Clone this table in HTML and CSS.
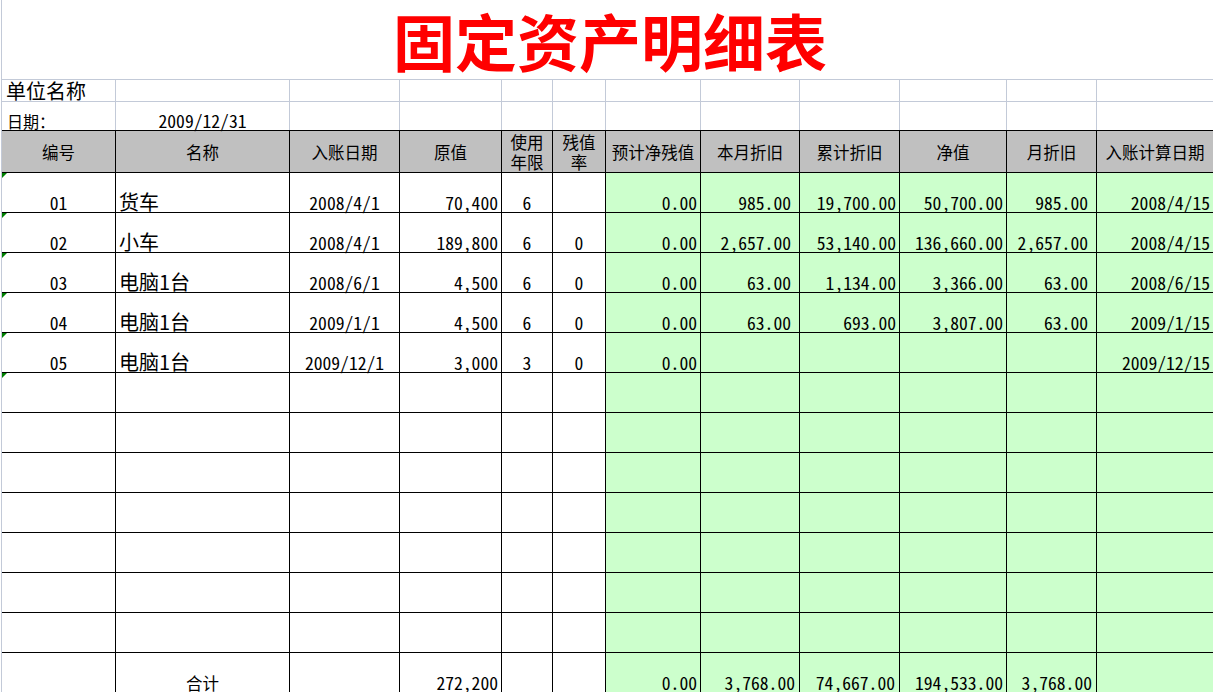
FILE: index.html
```html
<!DOCTYPE html>
<html lang="zh-CN">
<head>
<meta charset="utf-8">
<title>固定资产明细表</title>
<link rel="stylesheet" href="styles.css">
</head>
<body>
<div class="sheet">
  <div class="title-row"><h1 class="title">固定资产明细表</h1></div>

  <div class="row info info-unit">
    <div class="c unit">单位名称</div>
    <div class="c"></div><div class="c"></div><div class="c"></div><div class="c"></div><div class="c"></div>
    <div class="c"></div><div class="c"></div><div class="c"></div><div class="c"></div><div class="c"></div><div class="c"></div>
  </div>

  <div class="row info info-date">
    <div class="c label">日期：</div>
    <div class="c num center">2009/12/31</div>
    <div class="c"></div><div class="c"></div><div class="c"></div><div class="c"></div>
    <div class="c"></div><div class="c"></div><div class="c"></div><div class="c"></div><div class="c"></div><div class="c"></div>
  </div>

  <div class="row head">
    <div class="c">编号</div>
    <div class="c">名称</div>
    <div class="c">入账日期</div>
    <div class="c">原值</div>
    <div class="c two">使用<br>年限</div>
    <div class="c two">残值<br>率</div>
    <div class="c">预计净残值</div>
    <div class="c">本月折旧</div>
    <div class="c">累计折旧</div>
    <div class="c">净值</div>
    <div class="c">月折旧</div>
    <div class="c">入账计算日期</div>
  </div>

  <div class="row data">
    <div class="c num center tri">01</div>
    <div class="c name">货车</div>
    <div class="c num center">2008/4/1</div>
    <div class="c num right">70,400</div>
    <div class="c num center">6</div>
    <div class="c num center"></div>
    <div class="c g num right">0.00</div>
    <div class="c g num right wide">985.00</div>
    <div class="c g num right">19,700.00</div>
    <div class="c g num right">50,700.00</div>
    <div class="c g num right wide">985.00</div>
    <div class="c g num right">2008/4/15</div>
  </div>

  <div class="row data">
    <div class="c num center tri">02</div>
    <div class="c name">小车</div>
    <div class="c num center">2008/4/1</div>
    <div class="c num right">189,800</div>
    <div class="c num center">6</div>
    <div class="c num center">0</div>
    <div class="c g num right">0.00</div>
    <div class="c g num right wide">2,657.00</div>
    <div class="c g num right">53,140.00</div>
    <div class="c g num right">136,660.00</div>
    <div class="c g num right wide">2,657.00</div>
    <div class="c g num right">2008/4/15</div>
  </div>

  <div class="row data">
    <div class="c num center tri">03</div>
    <div class="c name">电脑1台</div>
    <div class="c num center">2008/6/1</div>
    <div class="c num right">4,500</div>
    <div class="c num center">6</div>
    <div class="c num center">0</div>
    <div class="c g num right">0.00</div>
    <div class="c g num right wide">63.00</div>
    <div class="c g num right">1,134.00</div>
    <div class="c g num right">3,366.00</div>
    <div class="c g num right wide">63.00</div>
    <div class="c g num right">2008/6/15</div>
  </div>

  <div class="row data">
    <div class="c num center tri">04</div>
    <div class="c name">电脑1台</div>
    <div class="c num center">2009/1/1</div>
    <div class="c num right">4,500</div>
    <div class="c num center">6</div>
    <div class="c num center">0</div>
    <div class="c g num right">0.00</div>
    <div class="c g num right wide">63.00</div>
    <div class="c g num right">693.00</div>
    <div class="c g num right">3,807.00</div>
    <div class="c g num right wide">63.00</div>
    <div class="c g num right">2009/1/15</div>
  </div>

  <div class="row data">
    <div class="c num center tri">05</div>
    <div class="c name">电脑1台</div>
    <div class="c num center">2009/12/1</div>
    <div class="c num right">3,000</div>
    <div class="c num center">3</div>
    <div class="c num center">0</div>
    <div class="c g num right">0.00</div>
    <div class="c g num right wide"></div>
    <div class="c g num right"></div>
    <div class="c g num right"></div>
    <div class="c g num right wide"></div>
    <div class="c g num right">2009/12/15</div>
  </div>

  <div class="row data">
    <div class="c tri"></div><div class="c"></div><div class="c"></div><div class="c"></div><div class="c"></div><div class="c"></div>
    <div class="c g"></div><div class="c g"></div><div class="c g"></div><div class="c g"></div><div class="c g"></div><div class="c g"></div>
  </div>
  <div class="row data">
    <div class="c"></div><div class="c"></div><div class="c"></div><div class="c"></div><div class="c"></div><div class="c"></div>
    <div class="c g"></div><div class="c g"></div><div class="c g"></div><div class="c g"></div><div class="c g"></div><div class="c g"></div>
  </div>
  <div class="row data">
    <div class="c"></div><div class="c"></div><div class="c"></div><div class="c"></div><div class="c"></div><div class="c"></div>
    <div class="c g"></div><div class="c g"></div><div class="c g"></div><div class="c g"></div><div class="c g"></div><div class="c g"></div>
  </div>
  <div class="row data">
    <div class="c"></div><div class="c"></div><div class="c"></div><div class="c"></div><div class="c"></div><div class="c"></div>
    <div class="c g"></div><div class="c g"></div><div class="c g"></div><div class="c g"></div><div class="c g"></div><div class="c g"></div>
  </div>
  <div class="row data">
    <div class="c"></div><div class="c"></div><div class="c"></div><div class="c"></div><div class="c"></div><div class="c"></div>
    <div class="c g"></div><div class="c g"></div><div class="c g"></div><div class="c g"></div><div class="c g"></div><div class="c g"></div>
  </div>
  <div class="row data">
    <div class="c"></div><div class="c"></div><div class="c"></div><div class="c"></div><div class="c"></div><div class="c"></div>
    <div class="c g"></div><div class="c g"></div><div class="c g"></div><div class="c g"></div><div class="c g"></div><div class="c g"></div>
  </div>
  <div class="row data">
    <div class="c"></div><div class="c"></div><div class="c"></div><div class="c"></div><div class="c"></div><div class="c"></div>
    <div class="c g"></div><div class="c g"></div><div class="c g"></div><div class="c g"></div><div class="c g"></div><div class="c g"></div>
  </div>

  <div class="row data total">
    <div class="c"></div>
    <div class="c cjk center">合计</div>
    <div class="c"></div>
    <div class="c num right">272,200</div>
    <div class="c"></div>
    <div class="c"></div>
    <div class="c g num right">0.00</div>
    <div class="c g num right mid">3,768.00</div>
    <div class="c g num right mid">74,667.00</div>
    <div class="c g num right">194,533.00</div>
    <div class="c g num right mid">3,768.00</div>
    <div class="c g"></div>
  </div>
</div>
</body>
</html>
```

FILE: styles.css
```css
html, body {
  margin: 0;
  padding: 0;
  background: #ffffff;
  overflow: hidden;
}

.sheet {
  margin-left: 1px;
  border-left: 1px solid #c3cad8;
  min-height: 692px;
  color: #000000;
  font-family: "Noto Sans CJK SC", "Noto Sans", sans-serif;
}

.title-row {
  box-sizing: border-box;
  height: 80px;
  border-bottom: 1px solid #c3cad8;
  display: flex;
  justify-content: center;
  align-items: center;
  padding-left: 5px;
}

.title {
  margin: 0;
  font-family: "Noto Sans CJK SC", sans-serif;
  font-weight: 700;
  font-size: 62px;
  line-height: 74px;
  color: #ff0000;
  letter-spacing: 0;
}

.row {
  display: grid;
  grid-template-columns: 114px 174px 110px 102px 51px 53px 95px 99px 100px 107px 90px 117px;
  box-sizing: border-box;
}

.c {
  box-sizing: border-box;
  border-right: 1px solid #000000;
  display: flex;
  align-items: flex-end;
  min-width: 0;
  white-space: nowrap;
  position: relative;
}

.info .c {
  border-right-color: #c3cad8;
}

.info-unit {
  height: 22px;
  border-bottom: 1px solid #c3cad8;
}

.info-date {
  height: 28px;
}

.unit {
  font-size: 20px;
  line-height: 21px;
  padding-left: 4px;
}

.label {
  font-size: 16px;
  line-height: 18px;
  padding-left: 5px;
}

.head {
  height: 43px;
  border-top: 1px solid #000000;
  border-bottom: 1px solid #000000;
  background: #c0c0c0;
}

.head .c {
  align-items: center;
  justify-content: center;
  font-size: 16.5px;
  line-height: 20px;
  text-align: center;
}

.head .two {
  white-space: normal;
}

.data {
  height: 40px;
  border-bottom: 1px solid #000000;
}

.g {
  background: #ccffcc;
}

.num {
  font-family: "Noto Sans Mono CJK SC", "Liberation Mono", monospace;
  font-size: 17.6px;
  line-height: 18px;
}

.cjk {
  font-size: 16.5px;
  line-height: 18px;
}

.center {
  justify-content: center;
}

.right {
  justify-content: flex-end;
  padding-right: 3px;
}

.right.wide {
  padding-right: 8px;
}

.right.mid {
  padding-right: 4px;
}

.name {
  font-size: 20px;
  line-height: 20px;
  padding-left: 3px;
}

.tri::before {
  content: "";
  position: absolute;
  left: 0;
  top: 0;
  border-top: 5px solid #008000;
  border-right: 5px solid transparent;
}
```
